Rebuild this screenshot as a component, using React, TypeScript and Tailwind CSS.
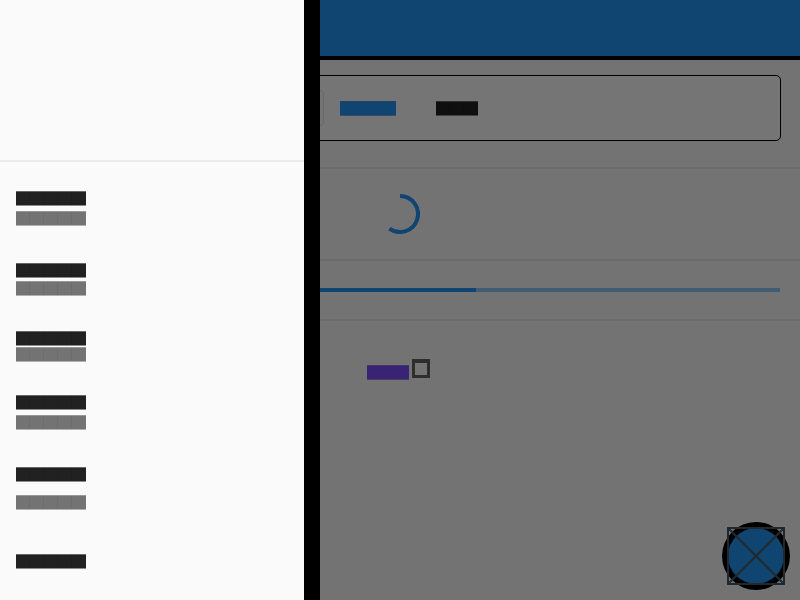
import React from "react";

type Tone = "dark" | "muted" | "blue" | "purple";

const tones: Record<Tone, { bar: string; seam: string }> = {
  dark: { bar: "bg-[#212121] border-t-[#666666] border-b-[#8a8a8a]", seam: "border-[#1e1e1e]" },
  muted: { bar: "bg-[#737373] border-t-[#979797] border-b-[#b0b0b0]", seam: "border-[#6d6d6d]" },
  blue: { bar: "bg-[#2196f3] border-t-[#5593c8] border-b-[#7aa8cf]", seam: "border-[#2196f3]" },
  purple: { bar: "bg-[#7c4dff] border-t-[#8f71df] border-b-[#a08ad8]", seam: "border-[#7c4dff]" },
};

// A word drawn as solid 14px glyph cells.
function Word({ cells, tone }: { cells: number; tone: Tone }) {
  return (
    <span className={`inline-flex h-[15px] border-y ${tones[tone].bar}`}>
      {Array.from({ length: cells }, (_, i) => (
        <span key={i} className={`w-3.5 ${i < cells - 1 ? "border-r" : ""} ${tones[tone].seam}`} />
      ))}
    </span>
  );
}

const tiles = [
  { height: "h-[72px]", gap: "gap-[5px]", subtitle: true },
  { height: "h-[68px]", gap: "gap-[3px]", subtitle: true },
  { height: "h-[64px]", gap: "gap-px", subtitle: true },
  { height: "h-[72px]", gap: "gap-[5px]", subtitle: true },
  { height: "h-[87px]", gap: "gap-[13px]", subtitle: true },
  { height: "h-[46px]", gap: "gap-px", subtitle: false },
];

function Drawer() {
  return (
    <nav aria-label="Drawer" className="absolute inset-y-0 left-0 w-80 overflow-hidden border-r-[16px] border-black bg-[#fafafa]">
      <div className="h-[162px] border-b-2 border-[#ebebeb]" />
      <ul className="px-4 pt-[29px]">
        {tiles.map((tile, i) => (
          <li key={i} className={tile.height}>
            <a href="#" aria-label={`Item ${i + 1}`} className={`flex flex-col items-start ${tile.gap}`}>
              <Word cells={5} tone="dark" />
              {tile.subtitle && <Word cells={5} tone="muted" />}
            </a>
          </li>
        ))}
      </ul>
    </nav>
  );
}

export default function App() {
  return (
    <div className="relative h-screen overflow-hidden bg-[#fafafa] font-['Roboto',sans-serif]">
      <header className="h-[60px] border-b-4 border-black bg-[#2196f3]" />
      <main>
        <section className="px-[19px] pt-[15px] pb-[26px]">
          <div className="flex h-[66px] rounded-[5px] border border-black bg-white pt-3.5 pl-[15px]">
            <button aria-label="First option" className="h-9 w-[289px] rounded border border-[#e4e4e4]" />
            <button aria-label="Second option" className="ml-4 flex h-9 pt-[11px]">
              <Word cells={4} tone="blue" />
            </button>
            <button aria-label="Third option" className="ml-10 flex h-9 pt-[11px]">
              <Word cells={3} tone="dark" />
            </button>
          </div>
        </section>
        <section className="flex justify-center border-t-2 border-[#ebebeb] py-[25px]">
          <svg width="40" height="40" viewBox="0 0 40 40" role="img" aria-label="Loading">
            <path d="M20 2A18 18 0 1 1 9.42 34.56" fill="none" stroke="#2196f3" strokeWidth="4" />
          </svg>
        </section>
        <section className="border-t-2 border-[#ebebeb] px-5 py-[27px]">
          <div role="progressbar" aria-label="Progress" aria-valuenow={60} className="h-1 bg-[#90caf9]">
            <div className="h-full w-3/5 bg-[#2196f3]" />
          </div>
        </section>
        <section className="flex justify-center border-t-2 border-[#ebebeb] pt-[38px]">
          <label className="flex gap-[3px] pr-[3px]">
            <span className="pt-1.5 leading-none">
              <Word cells={3} tone="purple" />
            </span>
            <input
              type="checkbox"
              aria-label="Option"
              className="h-[19px] w-[18px] appearance-none border-[3px] border-t-4 border-[#646464]"
            />
          </label>
        </section>
      </main>
      <button aria-label="Add" className="absolute right-2.5 bottom-2.5 size-[68px]">
        <svg width="68" height="68" viewBox="0 0 68 68" fill="none">
          <circle cx="34" cy="34" r="34" fill="#000" />
          <circle cx="34" cy="34" r="28" fill="#2196f3" />
          <path d="M6 6h56v56H6ZM6 6l56 56M62 6L6 62" stroke="#455a64" strokeWidth="2" />
        </svg>
      </button>
      <div className="absolute inset-0 bg-black/54" />
      <Drawer />
    </div>
  );
}
